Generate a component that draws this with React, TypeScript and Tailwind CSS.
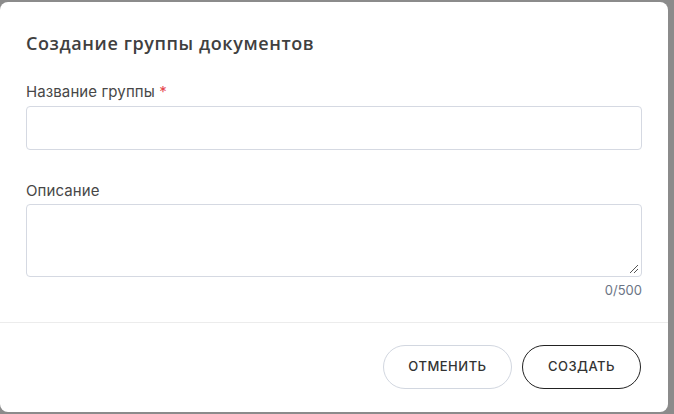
import React from "react";

export default function App() {
  return (
    <div className="w-[674px] h-[414px] bg-[#8b8b8b] overflow-hidden pt-[2px]" style={{ fontFamily: "Inter, 'Noto Sans', sans-serif" }}>
      <div className="w-[668px] h-[410px] bg-white rounded-[8px] flex flex-col">
        <div className="px-[26px] pt-[29px] flex flex-col">
          <h2 className="text-[18px] leading-[24px] font-semibold text-[#404040] tracking-[0.6px]" style={{ fontFamily: "'Open Sans', sans-serif" }}>
            Создание группы документов
          </h2>
          <label className="mt-[28px] text-[15px] leading-[18px] text-[#474747] tracking-[0.1px]">
            Название группы <span className="text-[#e5484d]">*</span>
          </label>
          <div className="mt-[5px] h-[44px] border border-[#d5d9e2] rounded-[4px]" />
          <label className="mt-[32px] text-[15px] leading-[18px] text-[#474747] tracking-[0.1px]">Описание</label>
          <div className="mt-[4px] h-[73px] border border-[#d5d9e2] rounded-[4px] relative">
            <svg className="absolute right-[2px] bottom-[2px]" width="10" height="10" viewBox="0 0 10 10">
              <line x1="1" y1="9" x2="9" y2="1" stroke="#555" strokeWidth="1" />
              <line x1="5" y1="9" x2="9" y2="5" stroke="#555" strokeWidth="1" />
            </svg>
          </div>
          <div className="mt-[5px] text-right text-[13px] leading-[16px] text-[#6b7485]">0/500</div>
        </div>
        <div className="mt-[24px] h-px bg-[#ececec]" />
        <div className="flex justify-end gap-[10px] px-[27px] pt-[22px]">
          <button className="h-[44px] w-[129px] rounded-full border border-[#d2d7e0] text-[13px] font-medium tracking-[0.5px] text-[#333]">
            ОТМЕНИТЬ
          </button>
          <button className="h-[44px] w-[119px] rounded-full border border-[#222] text-[13px] font-medium tracking-[0.5px] text-[#333]">
            СОЗДАТЬ
          </button>
        </div>
      </div>
    </div>
  );
}
